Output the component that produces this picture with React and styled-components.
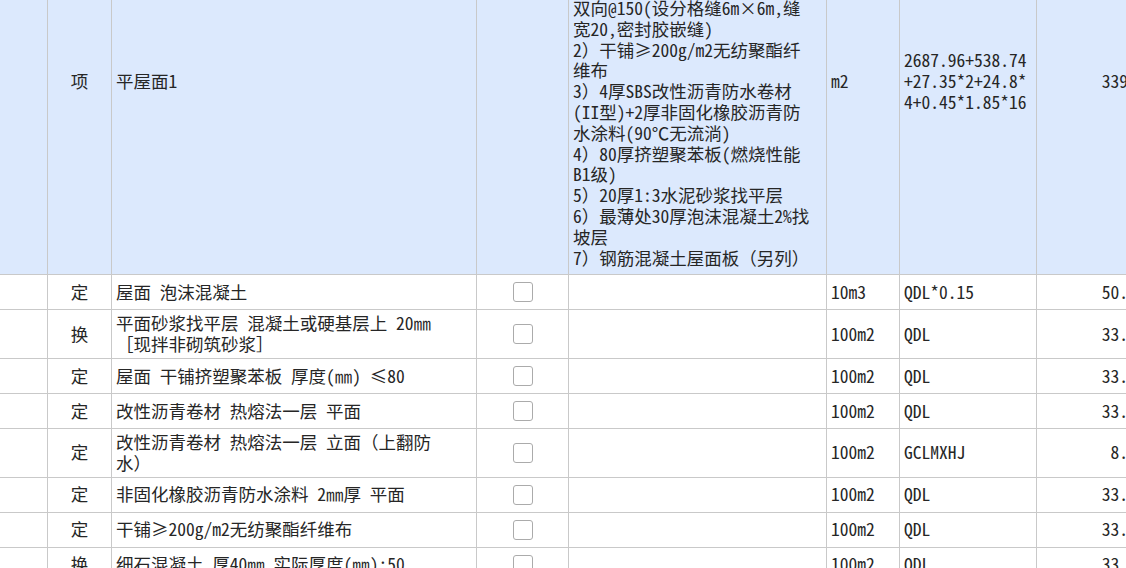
import React, { useLayoutEffect, useRef } from 'react';
import styled, { createGlobalStyle } from 'styled-components';

const GlobalStyle = createGlobalStyle`
  html, body {
    margin: 0;
    padding: 0;
    background: #ffffff;
  }
  body {
    font-family: "Noto Sans Mono CJK SC", "Noto Sans CJK SC", "Liberation Mono", monospace;
    font-size: 17.5px;
    color: #262626;
  }
`;

const COLUMNS = '47px 63px 364px 91px 257px 72px 136px 130px';

const Viewport = styled.div`
  width: 100vw;
  height: 100vh;
  overflow: hidden;
`;

const Table = styled.div`
  width: max-content;
  display: flex;
  flex-direction: column;
  gap: 1px;
  background: #c9c9c9;
  padding-bottom: 1px;
`;

const Row = styled.div`
  display: grid;
  grid-template-columns: ${COLUMNS};
  grid-auto-rows: minmax(34px, auto);
  gap: 1px;
`;

const Cell = styled.div`
  display: flex;
  align-items: center;
  justify-content: ${(props) => props.align || 'flex-start'};
  padding: ${(props) => props.pad || '3px 4px'};
  background: ${(props) => (props.header ? '#dce9fd' : '#ffffff')};
  line-height: 20.8px;
  white-space: nowrap;
  overflow: hidden;
`;

const Lines = styled.div`
  display: flex;
  flex-direction: column;
`;

const Box = styled.span`
  width: 18px;
  height: 18px;
  border: 1.5px solid #ababab;
  border-radius: 3px;
  background: #ffffff;
`;

const descLines = [
  '1）40厚C20细石混凝土保护',
  '层（内掺防水剂），表面压',
  '光，混凝土内配Φ4钢筋网',
  '片，钢筋网片在分格缝处断',
  '开，内配Φ4冷拔钢筋网片',
  '双向@150(设分格缝6m×6m,缝',
  '宽20,密封胶嵌缝)',
  '2）干铺≥200g/m2无纺聚酯纤',
  '维布',
  '3）4厚SBS改性沥青防水卷材',
  '(II型)+2厚非固化橡胶沥青防',
  '水涂料(90℃无流淌)',
  '4）80厚挤塑聚苯板(燃烧性能',
  'B1级)',
  '5）20厚1:3水泥砂浆找平层',
  '6）最薄处30厚泡沫混凝土2%找',
  '坡层',
  '7）钢筋混凝土屋面板（另列）',
];

const formulaLines = ['2687.96+538.74', '+27.35*2+24.8*', '4+0.45*1.85*16'];

const items = [
  { type: '定', name: ['屋面 泡沫混凝土'], unit: '10m3', expr: 'QDL*0.15', qty: '50.8976' },
  { type: '换', name: ['平面砂浆找平层 混凝土或硬基层上 20㎜', '［现拌非砌筑砂浆］'], unit: '100m2', expr: 'QDL', qty: '33.9317' },
  { type: '定', name: ['屋面 干铺挤塑聚苯板 厚度(㎜) ≤80'], unit: '100m2', expr: 'QDL', qty: '33.9317' },
  { type: '定', name: ['改性沥青卷材 热熔法一层 平面'], unit: '100m2', expr: 'QDL', qty: '33.9317' },
  { type: '定', name: ['改性沥青卷材 热熔法一层 立面（上翻防', '水）'], unit: '100m2', expr: 'GCLMXHJ', qty: '8.4235' },
  { type: '定', name: ['非固化橡胶沥青防水涂料 2㎜厚 平面'], unit: '100m2', expr: 'QDL', qty: '33.9317' },
  { type: '定', name: ['干铺≥200g/m2无纺聚酯纤维布'], unit: '100m2', expr: 'QDL', qty: '33.9317' },
  { type: '换', name: ['细石混凝土 厚40㎜  实际厚度(㎜):50'], unit: '100m2', expr: 'QDL', qty: '33.9317' },
];

function TextLines({ lines }) {
  return (
    <Lines>
      {lines.map((line, i) => (
        <span key={i}>{line}</span>
      ))}
    </Lines>
  );
}

export default function App() {
  const viewRef = useRef(null);

  // the grid is scrolled down a little, the top of the first row is out of view
  useLayoutEffect(() => {
    if (viewRef.current) {
      viewRef.current.scrollTop = 112;
    }
  }, []);

  return (
    <Viewport ref={viewRef}>
      <GlobalStyle />
      <Table>
        <Row>
          <Cell header />
          <Cell header align="center">项</Cell>
          <Cell header>平屋面1</Cell>
          <Cell header />
          <Cell header pad="6px 4px">
            <TextLines lines={descLines} />
          </Cell>
          <Cell header>m2</Cell>
          <Cell header>
            <TextLines lines={formulaLines} />
          </Cell>
          <Cell header align="flex-end">3393.17</Cell>
        </Row>
        {items.map((item, i) => (
          <Row key={i}>
            <Cell />
            <Cell align="center">{item.type}</Cell>
            <Cell>
              <TextLines lines={item.name} />
            </Cell>
            <Cell align="center">
              <Box />
            </Cell>
            <Cell />
            <Cell>{item.unit}</Cell>
            <Cell>{item.expr}</Cell>
            <Cell align="flex-end">{item.qty}</Cell>
          </Row>
        ))}
      </Table>
    </Viewport>
  );
}
